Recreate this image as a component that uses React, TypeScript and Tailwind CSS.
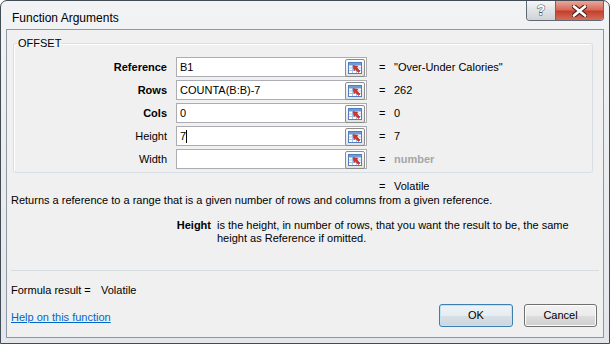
import React from "react";

const font = "font-['Liberation_Sans',Arial,sans-serif]";

function RefButton() {
  return (
    <div className="w-[20px] h-[18px] mt-px mr-px flex items-center justify-center rounded-[2px] border border-[#8c8c8c] bg-[linear-gradient(#fdfdfd,#e2e2e2)]">
      <svg width="16" height="14" viewBox="0 0 16 14">
        <rect x="1.5" y="1.5" width="13" height="11" fill="#fff" stroke="#4f7fc0" />
        <rect x="2" y="2" width="12" height="2.5" fill="#6f9bd6" />
        <line x1="2" y1="7" x2="14" y2="7" stroke="#a9c3e6" />
        <line x1="2" y1="9.5" x2="14" y2="9.5" stroke="#a9c3e6" />
        <line x1="5.5" y1="4" x2="5.5" y2="12" stroke="#a9c3e6" />
        <line x1="9.5" y1="4" x2="9.5" y2="12" stroke="#a9c3e6" />
        <path d="M6 4.5 L11 5.5 L9.8 6.8 L13 10 L11.5 11.5 L8.3 8.3 L7 9.5 Z" fill="#d9342b" stroke="#8e1b14" strokeWidth="0.5" />
      </svg>
    </div>
  );
}

const args = [
  { label: "Reference", bold: true, value: "B1", result: "\"Over-Under Calories\"" },
  { label: "Rows", bold: true, value: "COUNTA(B:B)-7", result: "262" },
  { label: "Cols", bold: true, value: "0", result: "0" },
  { label: "Height", bold: false, value: "7", result: "7", caret: true },
  { label: "Width", bold: false, value: "", result: "number", muted: true },
];

export default function App() {
  return (
    <div className={`${font} w-[610px] h-[344px] flex flex-col rounded-t-[7px] border border-[#434b55] bg-[linear-gradient(#f1f3f5,#e3e7eb)] px-[5px] pb-[5px] text-[11px] leading-[13px] text-black`}>
      {/* title bar */}
      <div className="h-[28px] flex items-start">
        <div className="pt-[10px] pl-[6px] text-[12px] leading-[14px] text-black">Function Arguments</div>
        <div className="ml-auto flex border border-t-0 border-[#5f6873] rounded-b-[4px] overflow-hidden h-[20px]">
          <div className="w-[29px] flex items-center justify-center bg-[linear-gradient(#f5f6f7,#e0e3e6_50%,#cfd3d8)] border-r border-[#5f6873]">
            <span className="text-[14px] font-bold text-white [-webkit-text-stroke:1px_#4b5058] [paint-order:stroke_fill]">?</span>
          </div>
          <div className="w-[47px] flex items-center justify-center bg-[linear-gradient(#e8a89c,#d86b5a_45%,#c4402f_55%,#d56d5a)]">
            <svg width="15" height="12" viewBox="0 0 15 12">
              <path d="M2 1.5 L13 10.5 M13 1.5 L2 10.5" stroke="#4a1a14" strokeWidth="4.8" strokeLinecap="round" />
              <path d="M2 1.5 L13 10.5 M13 1.5 L2 10.5" stroke="#fff" strokeWidth="2.8" strokeLinecap="round" />
            </svg>
          </div>
        </div>
      </div>

      {/* client area */}
      <div className="flex-1 flex flex-col border border-[#8d98a4] bg-[#f0f0f0]">
        <fieldset className="mt-[7px] ml-[6px] w-[580px] rounded-[3px] border border-[#d5dfe5] shadow-[inset_1px_1px_0_#fff] px-0 pb-[3px]">
          <legend className="ml-[3px] px-[1px] leading-[13px]">OFFSET</legend>
          <div className="mt-[7px] flex flex-col gap-[3px]">
            {args.map((a) => (
              <div key={a.label} className="h-[20px] flex items-center">
                <div className={`w-[153px] text-right ${a.bold ? "font-bold" : ""}`}>{a.label}</div>
                <div className="ml-[9px] w-[191px] h-[20px] flex border border-[#abadb3] bg-white">
                  <div className="flex-1 flex items-center pl-[3px]">
                    {a.value}
                    {a.caret && <span className="inline-block w-px h-[13px] bg-black" />}
                  </div>
                  <RefButton />
                </div>
                <div className="ml-[12px] w-[15px]">=</div>
                <div className={a.muted ? "font-bold text-[#a6a6a6]" : ""}>{a.result}</div>
              </div>
            ))}
          </div>
        </fieldset>

        <div className="mt-[7px] pl-[372px] flex">
          <span className="w-[15px]">=</span>
          <span>Volatile</span>
        </div>
        <div className="mt-[1px] pl-[4px]">
          Returns a reference to a range that is a given number of rows and columns from a given reference.
        </div>
        <div className="mt-[12px] flex">
          <div className="w-[204px] text-right font-bold">Height</div>
          <div className="ml-[6px] w-[362px]">
            is the height, in number of rows, that you want the result to be, the same height as Reference if omitted.
          </div>
        </div>

        <div className="mt-[25px] mx-[4px] h-px bg-[#d7dce1]" />

        <div className="mt-[13px] pl-[4px] flex">
          <span className="w-[90px]">Formula result =</span>
          <span>Volatile</span>
        </div>

        <div className="mt-[7px] pl-[4px] pr-[6px] flex items-center">
          <span className="pt-[3px] text-[#0066cc] underline">Help on this function</span>
          <div className="ml-auto flex gap-[11px]">
            <button className="w-[74px] h-[23px] rounded-[3px] border border-[#3c7fb1] bg-[linear-gradient(#eef3f7,#e6ecf1_50%,#d8e0e7_51%,#cdd6de)] shadow-[inset_0_0_0_1px_#bfe4f8] text-[11px]">
              OK
            </button>
            <button className="w-[73px] h-[23px] rounded-[3px] border border-[#707070] bg-[linear-gradient(#f2f2f2,#ebebeb_50%,#dddddd_51%,#cfcfcf)] shadow-[inset_0_0_0_1px_#fcfcfc] text-[11px]">
              Cancel
            </button>
          </div>
        </div>
      </div>
    </div>
  );
}
